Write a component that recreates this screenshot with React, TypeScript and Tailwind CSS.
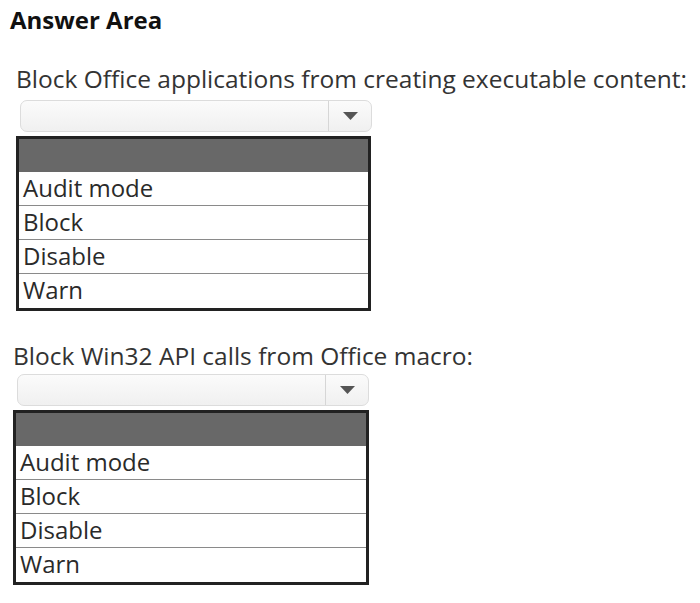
const options = ["Audit mode", "Block", "Disable", "Warn"];

export default function App() {
  return (
    <main className="h-[603px] w-[700px] overflow-hidden bg-white font-['Open_Sans',sans-serif] text-[#2b2b2b]">
      <h1 className="pl-[10px] pt-[5px] text-[24px] font-bold leading-[30px] text-[#111]">
        Answer Area
      </h1>

      <section className="ml-[16px] mt-[29px]">
        <p className="text-[24.5px] leading-[30px] text-[#333]">
          Block Office applications from creating executable content:
        </p>
        <Dropdown className="ml-[4px] mt-[6px] w-[352px]" />
        <OptionList className="mt-[4px] w-[355px]" />
      </section>

      <section className="ml-[13px] mt-[30px]">
        <p className="text-[24.5px] leading-[30px] text-[#333]">
          Block Win32 API calls from Office macro:
        </p>
        <Dropdown className="ml-[4px] mt-[3px] w-[352px]" />
        <OptionList className="mt-[4px] w-[356px]" />
      </section>
    </main>
  );
}

function Dropdown({ className }: { className: string }) {
  return (
    <div
      className={`flex h-[32px] rounded-[7px] border border-[#dcdcdc] bg-gradient-to-b from-[#fbfbfb] to-[#f0f0f0] ${className}`}
    >
      <div className="flex-1" />
      <div className="flex w-[43px] items-center justify-center border-l border-[#d6d6d6]">
        <svg width="15" height="8" viewBox="0 0 15 8">
          <path d="M0 0 L15 0 L7.5 8 Z" fill="#555" />
        </svg>
      </div>
    </div>
  );
}

function OptionList({ className }: { className: string }) {
  return (
    <div className={`border-[3px] border-[#222] bg-white ${className}`}>
      <div className="h-[33px] bg-[#686868]" />
      {options.map((o, i) => (
        <div
          key={o}
          className={`h-[34px] pl-[4px] text-[24px] leading-[32px] text-[#2a2a2a] ${
            i < options.length - 1 ? "border-b border-[#8a8a8a]" : ""
          }`}
        >
          {o}
        </div>
      ))}
    </div>
  );
}
